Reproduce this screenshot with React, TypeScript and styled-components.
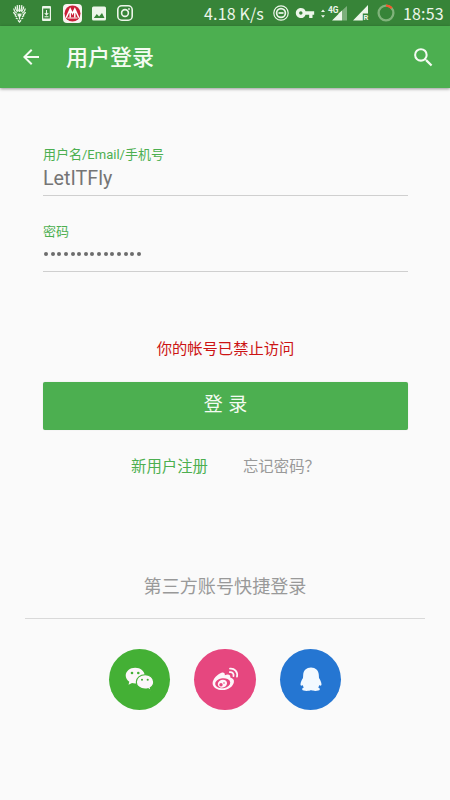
import React from 'react';
import styled, { createGlobalStyle } from 'styled-components';
import { MdArrowBack, MdSearch, MdVpnKey } from 'react-icons/md';

const GlobalStyle = createGlobalStyle`
  * { box-sizing: border-box; }
  body { margin: 0; background: #fafafa; }
  button { border: 0; padding: 0; background: none; font: inherit; color: inherit; }
`;

const Screen = styled.div`
  width: 450px;
  height: 800px;
  display: flex;
  flex-direction: column;
  overflow: hidden;
  background: #fafafa;
  font-family: Roboto, 'Noto Sans CJK SC', sans-serif;
`;

const StatusBar = styled.div`
  height: 26px;
  flex: none;
  display: flex;
  align-items: center;
  justify-content: space-between;
  padding: 0 6px 0 12px;
  background: #378438;
  color: #edf6ea;
  svg { display: block; flex: none; }
`;

const StatusGroup = styled.div`
  display: flex;
  align-items: center;
`;

const Gap = styled.span<{ $w: number }>`
  width: ${(p) => p.$w}px;
  flex: none;
`;

const StatusText = styled.span<{ $width: number }>`
  width: ${(p) => p.$width}px;
  font: 400 16px/26px 'Noto Sans CJK SC', sans-serif;
  letter-spacing: 0.15px;
  white-space: nowrap;
`;

const AppBar = styled.header`
  height: 62px;
  flex: none;
  display: flex;
  align-items: center;
  padding: 0 14px 0 19px;
  background: #4caf50;
  color: #f4fbf2;
  box-shadow: 0 1px 3px rgba(0, 0, 0, 0.4);
  svg { display: block; }
`;

const Title = styled.h1`
  flex: 1;
  margin: 2px 0 0 23px;
  font-size: 22px;
  font-weight: 500;
  line-height: 32px;
`;

const Form = styled.form`
  display: flex;
  flex-direction: column;
  padding: 57px 42px 0 43px;
`;

const Field = styled.div<{ $last?: boolean }>`
  display: flex;
  flex-direction: column;
  height: ${(p) => (p.$last ? 50 : 51)}px;
  margin-bottom: ${(p) => (p.$last ? 65 : 26)}px;
  border-bottom: 1px solid #cfcfcf;
`;

const FieldLabel = styled.span`
  font-size: 13px;
  line-height: 19px;
  color: #4caf50;
`;

const FieldValue = styled.span`
  font-size: 19.7px;
  line-height: 30px;
  color: #757575;
`;

const Dots = styled.span`
  display: flex;
  gap: 2.65px;
  padding: 11px 0 0 1px;
`;

const Dot = styled.i`
  width: 4px;
  height: 4px;
  border-radius: 50%;
  background: #6c6c6c;
`;

const ErrorText = styled.p`
  margin: 0;
  text-align: center;
  font-size: 15.3px;
  line-height: 24px;
  color: #cc1414;
`;

const SubmitButton = styled.button`
  && {
    height: 48px;
    margin-top: 21px;
    border-radius: 2px;
    background: #4caf50;
    color: #f4fbf2;
    font-size: 19px;
    line-height: 44px;
    padding-bottom: 2px;
    word-spacing: 1px;
    box-shadow: 0 0 1px rgba(0, 0, 0, 0.2);
  }
`;

const Links = styled.div`
  display: flex;
  gap: 35px;
  margin: 25px 0 0 88px;
  font-size: 15.4px;
  line-height: 24px;
`;

const Link = styled.a<{ $muted?: boolean }>`
  color: ${(p) => (p.$muted ? '#999' : '#4caf50')};
`;

const ThirdParty = styled.section`
  display: flex;
  flex-direction: column;
  margin: 94px 25px 0;
`;

const ThirdPartyTitle = styled.h2`
  margin: 0;
  height: 46px;
  border-bottom: 1px solid #d9d9d9;
  text-align: center;
  font-size: 18.1px;
  font-weight: 400;
  line-height: 28px;
  color: #999;
`;

const Socials = styled.div`
  display: flex;
  justify-content: center;
  gap: 24px;
  margin-top: 29.5px;
`;

const SocialButton = styled.button<{ $color: string }>`
  && {
    width: 61.5px;
    height: 61.5px;
    display: flex;
    align-items: center;
    justify-content: center;
    border-radius: 50%;
    background: ${(p) => p.$color};
    color: #fdf6fa;
  }
`;

const LionIcon = () => (
  <svg width="15" height="19" viewBox="0 0 15 19" fill="none" stroke="currentColor" strokeWidth="1.3">
    <path d="M7.500 1v7M5.300 1.200c-.3 2 .2 4 1 6M9.700 1.200c.3 2-.2 4-1 6M3.300 2.400c0 2.500 1 4 2.200 5.500M11.700 2.400c0 2.500-1 4-2.200 5.500M1.700 4.500c.2 2.500 1.300 3.700 3 4.800M13.300 4.500c-.2 2.500-1.300 3.700-3 4.800" />
    <path d="M1.500 8c.5 1.500 1.300 2.300 2.700 3M13.500 8c-.5 1.500-1.300 2.300-2.700 3M2.800 11.500l2 1.300M12.200 11.500l-2 1.300M3.800 14l2 1M11.200 14l-2 1M7.500 9.500v6M6 9.500l.5 3M9 9.500l-.5 3M6 16.300l1.500 1.700L9 16.300" />
  </svg>
);

const DownloadIcon = () => (
  <svg width="9" height="15" viewBox="0 0 9 15">
    <path fill="currentColor" fillRule="evenodd" d="M1 0h7a1 1 0 011 1v13a1 1 0 01-1 1H1a1 1 0 01-1-1V1a1 1 0 011-1zM1.200 2.500v10h6.600v-10z" />
    <path d="M4.500 4v4.500M2.700 7l1.800 2 1.800-2M2.500 10.700h4" fill="none" stroke="currentColor" strokeWidth="1.100" />
  </svg>
);

const BankIcon = () => (
  <svg width="19" height="19" viewBox="0 0 19 19">
    <rect width="19" height="19" rx="4" fill="#f8f4f1" />
    <circle cx="9.500" cy="9.500" r="8" fill="#c91f37" />
    <path d="M3.200 13.700L7.200 5l2.300 4.500L11.800 5l4 8.700M7.200 5v8.500M11.800 5v8.500" fill="none" stroke="#fff" strokeWidth="1.500" />
    <path d="M4.500 14h10" stroke="#fff" strokeWidth="1" />
  </svg>
);

const PhotoIcon = () => (
  <svg width="14" height="15" viewBox="0 0 14 15">
    <rect y=".5" width="14" height="14" rx="1.500" fill="currentColor" />
    <path d="M1.800 12l3-4 2.300 2.500L10 7l2.500 5z" fill="#378438" />
  </svg>
);

const InstagramIcon = () => (
  <svg width="16" height="16" viewBox="0 0 16 16" fill="none" stroke="currentColor" strokeWidth="1.600">
    <rect x=".8" y=".8" width="14.400" height="14.400" rx="4" />
    <circle cx="8" cy="8" r="3.400" />
    <circle cx="12" cy="4" r=".9" fill="currentColor" stroke="none" />
  </svg>
);

const DndIcon = () => (
  <svg width="16" height="16" viewBox="0 0 16 16" fill="none" stroke="currentColor">
    <circle cx="8" cy="8" r="7.200" strokeWidth="1.200" />
    <circle cx="8" cy="8" r="4.400" strokeWidth="1.700" />
    <path d="M5.500 8h5" strokeWidth="1.700" />
  </svg>
);

const MobileSignalIcon = () => (
  <svg width="28" height="18" viewBox="0 0 28 18">
    <path d="M1 8l2-2.600L5 8zM1 11.200l2 2.600 2-2.600z" fill="currentColor" />
    <path d="M22 6.500L27 2v14.500h-5z" fill="currentColor" opacity=".38" />
    <path d="M12 16.500L18.500 10V9.600L22 6.500v10z" fill="currentColor" />
    <text x="8" y="9" fontSize="9.500" fontWeight="700" fontFamily="Roboto" textLength="10.500" lengthAdjust="spacingAndGlyphs" fill="currentColor">4G</text>
  </svg>
);

const RoamingSignalIcon = () => (
  <svg width="17" height="20" viewBox="0 0 17 20">
    <path d="M0 17.500L15 2v8.500h-5.200v7z" fill="currentColor" />
    <text x="10.500" y="17.300" fontSize="7.500" fontWeight="700" fontFamily="Roboto" fill="currentColor">R</text>
  </svg>
);

const BatteryIcon = () => (
  <svg width="18" height="18" viewBox="0 0 18 18" fill="none" strokeWidth="2.300">
    <circle cx="9" cy="9" r="7.400" stroke="#80b37b" />
    <path d="M9 1.600a7.400 7.400 0 015.700 2.700" stroke="#f4572c" />
  </svg>
);

const WechatIcon = () => (
  <svg width="29" height="24" viewBox="0 0 29 24">
    <path fill="currentColor" d="M10.200.8C4.900.8.7 4.200.7 8.600c0 2.500 1.400 4.700 3.600 6.100l-.8 3 3.500-1.800c1 .3 2.100.5 3.200.5 5.300 0 9.500-3.500 9.500-7.800S15.500.8 10.200.8z" />
    <path fill="currentColor" stroke="#44b035" strokeWidth="1.100" d="M20.100 7.700c-5 0-8.800 3.200-8.800 7.200s3.800 7.200 8.800 7.200c1 0 2-.1 2.900-.4l3 1.700-.7-2.700c2.100-1.300 3.400-3.400 3.400-5.800 0-4-3.700-7.200-8.600-7.200z" />
    <g fill="#44b035">
      <circle cx="7" cy="6" r="1.300" />
      <circle cx="13.300" cy="6" r="1.300" />
      <circle cx="17" cy="12.700" r="1.050" />
      <circle cx="22.700" cy="12.700" r="1.050" />
    </g>
  </svg>
);

const WeiboIcon = () => (
  <svg width="27" height="24" viewBox="0 0 27 24">
    <path fill="currentColor" d="M9.500 5.700c1.800-.8 3.800.1 3.300 2.500 2.800-1.100 6-1 5.500 2.200 2.500.6 4.100 2.200 3.600 4.800-.8 4.400-5.800 7.900-11.400 7.900C5.100 23.100.6 20.300.6 16.200c0-4 4.600-8.900 8.900-10.500z" />
    <ellipse cx="10.700" cy="16.300" rx="7.600" ry="5" transform="rotate(-8 10.700 16.300)" fill="#e6477f" />
    <ellipse cx="10.400" cy="16.700" rx="4.700" ry="3.900" transform="rotate(-20 10.400 16.700)" fill="currentColor" />
    <circle cx="9" cy="17.700" r="1.700" fill="#e6477f" />
    <circle cx="12" cy="16" r=".8" fill="#e6477f" />
    <path d="M18 1.600c4.500-.5 8 3.200 7 8M17.800 5.200c2.600-.3 4.200 1.500 3.700 3.900" fill="none" stroke="currentColor" strokeWidth="1.800" strokeLinecap="round" />
  </svg>
);

const QqIcon = () => (
  <svg width="22" height="25" viewBox="0 0 22 25">
    <path
      fill="#f3f9ff"
      d="M11 .6C6.500.6 3.400 3.700 3.200 7.800L3 11C1.600 13.100.6 15.300.5 17.200c0 1.500.8 1.900 2 .9.300.8.700 1.600 1.400 2.300-1.300.4-1.900 1.200-1.700 2.200.5 1.800 7 1.800 8.800.5 1.800 1.300 8.300 1.300 8.800-.5.200-1-.4-1.800-1.700-2.200.7-.7 1.100-1.500 1.400-2.300 1.200 1 2 .6 2-.9-.1-1.900-1.100-4.100-2.500-6.200l-.2-3.200C18.600 3.700 15.500.6 11 .6z"
    />
  </svg>
);

const PASSWORD_LENGTH = 15;

export default function App() {
  return (
    <>
      <GlobalStyle />
      <Screen>
        <StatusBar>
          <StatusGroup>
            <LionIcon />
            <Gap $w={15} />
            <DownloadIcon />
            <Gap $w={12} />
            <BankIcon />
            <Gap $w={10} />
            <PhotoIcon />
            <Gap $w={11} />
            <InstagramIcon />
          </StatusGroup>
          <StatusGroup>
            <StatusText $width={69}>4.18 K/s</StatusText>
            <DndIcon />
            <Gap $w={6} />
            <MdVpnKey size={20} />
            <Gap $w={5} />
            <MobileSignalIcon />
            <Gap $w={5} />
            <RoamingSignalIcon />
            <Gap $w={7} />
            <BatteryIcon />
            <Gap $w={8} />
            <StatusText $width={41}>18:53</StatusText>
          </StatusGroup>
        </StatusBar>
        <AppBar>
          <MdArrowBack size={24} />
          <Title>用户登录</Title>
          <MdSearch size={25} />
        </AppBar>
        <Form>
          <Field>
            <FieldLabel>用户名/Email/手机号</FieldLabel>
            <FieldValue>LetITFly</FieldValue>
          </Field>
          <Field $last>
            <FieldLabel>密码</FieldLabel>
            <Dots>
              {Array.from({ length: PASSWORD_LENGTH }, (_, i) => (
                <Dot key={i} />
              ))}
            </Dots>
          </Field>
          <ErrorText>你的帐号已禁止访问</ErrorText>
          <SubmitButton type="button">登 录</SubmitButton>
          <Links>
            <Link>新用户注册</Link>
            <Link $muted>忘记密码？</Link>
          </Links>
        </Form>
        <ThirdParty>
          <ThirdPartyTitle>第三方账号快捷登录</ThirdPartyTitle>
          <Socials>
            <SocialButton type="button" $color="#44b035" aria-label="微信">
              <WechatIcon />
            </SocialButton>
            <SocialButton type="button" $color="#e6477f" aria-label="微博">
              <WeiboIcon />
            </SocialButton>
            <SocialButton type="button" $color="#2576d2" aria-label="QQ">
              <QqIcon />
            </SocialButton>
          </Socials>
        </ThirdParty>
      </Screen>
    </>
  );
}
